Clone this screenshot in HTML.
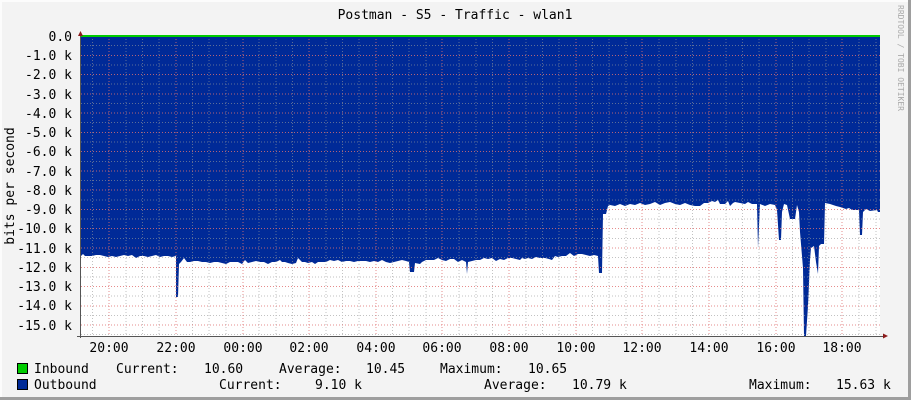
<!DOCTYPE html>
<html><head><meta charset="utf-8"><style>
html,body{margin:0;padding:0;background:#f3f3f3;}
svg{display:block;font-family:"DejaVu Sans Mono","Liberation Mono",monospace;}
</style></head><body>
<svg width="911" height="400" viewBox="0 0 911 400" xmlns="http://www.w3.org/2000/svg">
<rect x="0" y="0" width="911" height="400" fill="#f3f3f3"/>
<rect x="0" y="0" width="911" height="2" fill="#fcfcfc"/>
<rect x="0" y="0" width="2" height="400" fill="#fcfcfc"/>
<rect x="0" y="397" width="911" height="3" fill="#9e9e9e"/>
<rect x="908" y="0" width="3" height="400" fill="#9e9e9e"/>
<rect x="81" y="36" width="799" height="300" fill="#ffffff"/>
<polygon fill="#002a97" points="81,36 880,36 880,212 878,212 877,210 870,211 866,209 863,212 862,235 860,235 859,210 856,210 852,210 849,208 846,209 840,207 836,206 830,204 825,203 824,244 821,244 819,246 818,274 816,262 814,246 811,248 810,260 808,306 806,336 804,336 803,268 800,232 799,212 797,205 795,219 790,219 787,205 784,204 782,212 781,240 779,240 777,210 775,205 770,204 765,206 760,204 758,248 757,204 752,204 748,202 745,204 740,203 735,202 733,203 730,206 728,201 725,204 720,204 718,200 715,202 712,201 708,203 704,203 700,206 695,206 690,205 685,203 680,205 675,204 670,202 665,203 660,205 655,202 650,204 645,205 640,203 635,205 630,204 625,206 620,204 615,206 610,205 608,206 606,214 603,214 602,273 599,273 598,256 594,255 590,256 586,255 582,254 578,254 574,256 570,253 566,256 562,256 558,257 555,256 552,260 549,259 545,258 540,258 536,257 532,259 528,258 525,259 522,258 520,260 516,259 512,258 508,258 504,260 500,259 496,261 492,258 488,259 484,258 480,260 476,260 472,261 468,262 467,274 466,262 462,260 458,262 454,259 450,259 446,261 442,260 438,258 434,260 430,260 426,260 422,262 420,264 415,263 414,272 410,272 409,262 406,261 402,260 398,261 394,262 390,263 386,262 382,260 378,262 374,261 370,262 366,261 362,261 358,261 354,262 350,261 346,261 342,262 338,260 334,261 330,260 326,262 322,262 318,262 315,264 312,262 308,263 305,262 302,262 298,258 296,263 292,264 288,263 285,262 282,262 280,260 276,262 272,262 268,264 264,262 260,262 256,261 252,262 248,263 245,260 242,264 238,262 234,262 230,262 226,264 222,263 218,262 214,262 210,263 206,262 202,262 198,261 194,261 190,262 187,262 184,258 181,262 179,264 178,297 176,297 176,256 172,257 168,256 164,256 160,257 156,255 152,256 148,257 144,256 140,256 136,258 132,255 128,256 124,255 120,256 116,257 112,256 108,257 104,256 100,255 96,255 92,256 88,256 85,256 83,254 81,256"/>
<g stroke-width="1" stroke-dasharray="1,2" shape-rendering="crispEdges">
<g stroke="#9a9a9a" opacity="0.6">
<path d="M81 45.6H880M81 64.9H880M81 84.2H880M81 103.4H880M81 122.7H880M81 142H880M81 161.3H880M81 180.5H880M81 199.8H880M81 219.1H880M81 238.4H880M81 257.6H880M81 276.9H880M81 296.2H880M81 315.5H880M81 334.7H880"/>
<path d="M92.5 36V336M125.8 36V336M142.5 36V336M159.2 36V336M192.5 36V336M209.2 36V336M225.8 36V336M259.2 36V336M275.8 36V336M292.5 36V336M325.8 36V336M342.5 36V336M359.2 36V336M392.5 36V336M409.2 36V336M425.8 36V336M459.2 36V336M475.8 36V336M492.5 36V336M525.8 36V336M542.5 36V336M559.2 36V336M592.5 36V336M609.2 36V336M625.8 36V336M659.2 36V336M675.8 36V336M692.5 36V336M725.8 36V336M742.5 36V336M759.2 36V336M792.5 36V336M809.2 36V336M825.8 36V336M859.2 36V336M875.8 36V336"/>
</g>
<g stroke="#e07070" opacity="0.8">
<path d="M81 55.3H880M81 74.5H880M81 93.8H880M81 113.1H880M81 132.4H880M81 151.6H880M81 170.9H880M81 190.2H880M81 209.5H880M81 228.7H880M81 248H880M81 267.3H880M81 286.6H880M81 305.8H880M81 325.1H880"/>
<path d="M109 36V336M176 36V336M243 36V336M309 36V336M376 36V336M442 36V336M509 36V336M576 36V336M642 36V336M709 36V336M776 36V336M842 36V336"/>
</g>
</g>
<rect x="81" y="35" width="799" height="2" fill="#00cc00"/>
<rect x="80" y="36" width="1" height="302" fill="#555"/>
<rect x="77" y="336" width="806" height="1" fill="#555"/>
<polygon points="78,36 83,36 80.5,31" fill="#8b1a1a"/>
<polygon points="883,333.5 883,338.5 888,336" fill="#8b1a1a"/>
<g font-size="13" fill="#000" text-anchor="end">
<text x="72" y="41">0.0</text><text x="72" y="60">-1.0 k</text><text x="72" y="79">-2.0 k</text><text x="72" y="99">-3.0 k</text><text x="72" y="118">-4.0 k</text><text x="72" y="137">-5.0 k</text><text x="72" y="156">-6.0 k</text><text x="72" y="176">-7.0 k</text><text x="72" y="195">-8.0 k</text><text x="72" y="214">-9.0 k</text><text x="72" y="233">-10.0 k</text><text x="72" y="253">-11.0 k</text><text x="72" y="272">-12.0 k</text><text x="72" y="291">-13.0 k</text><text x="72" y="310">-14.0 k</text><text x="72" y="330">-15.0 k</text>
</g>
<g font-size="13" fill="#000" text-anchor="middle">
<text x="109" y="352">20:00</text><text x="176" y="352">22:00</text><text x="243" y="352">00:00</text><text x="309" y="352">02:00</text><text x="376" y="352">04:00</text><text x="442" y="352">06:00</text><text x="509" y="352">08:00</text><text x="576" y="352">10:00</text><text x="642" y="352">12:00</text><text x="709" y="352">14:00</text><text x="776" y="352">16:00</text><text x="842" y="352">18:00</text>
<text x="455" y="19">Postman - S5 - Traffic - wlan1</text>
<text transform="translate(14,186) rotate(-90)">bits per second</text>
</g>
<text transform="translate(898,5) rotate(90)" font-size="8" fill="#aaa">RRDTOOL / TOBI OETIKER</text>
<rect x="17.5" y="363.5" width="10" height="10" fill="#00cc00" stroke="#000"/>
<rect x="17.5" y="379.5" width="10" height="10" fill="#002a97" stroke="#000"/>
<g font-size="13" fill="#000">
<text x="34" y="373">Inbound</text><text x="116" y="373">Current:</text><text x="204" y="373">10.60</text><text x="279" y="373">Average:</text><text x="366" y="373">10.45</text><text x="440" y="373">Maximum:</text><text x="528" y="373">10.65</text>
<text x="34" y="389">Outbound</text><text x="219" y="389">Current:</text><text x="315" y="389">9.10 k</text><text x="484" y="389">Average:</text><text x="572" y="389">10.79 k</text><text x="749" y="389">Maximum:</text><text x="836" y="389">15.63 k</text>
</g>
</svg>
</body></html>
